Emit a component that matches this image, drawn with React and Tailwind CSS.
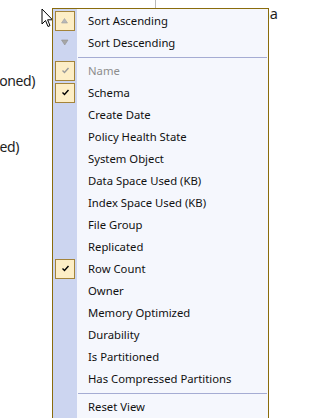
import React from 'react';

const items = [
  { label: 'Name', check: 'disabled' },
  { label: 'Schema', check: 'on' },
  { label: 'Create Date' },
  { label: 'Policy Health State' },
  { label: 'System Object' },
  { label: 'Data Space Used (KB)' },
  { label: 'Index Space Used (KB)' },
  { label: 'File Group' },
  { label: 'Replicated' },
  { label: 'Row Count', check: 'on' },
  { label: 'Owner' },
  { label: 'Memory Optimized' },
  { label: 'Durability' },
  { label: 'Is Partitioned' },
  { label: 'Has Compressed Partitions' },
];

const Box = ({ children }) => (
  <div className="w-[20px] h-[20px] border border-[#a4843a] bg-[#fdeec6]">{children}</div>
);

const Check = ({ color }) => (
  <svg width="18" height="18" viewBox="0 0 18 18">
    <polyline points="6.5,8.5 8.5,10.5 12.5,6" fill="none" stroke={color} strokeWidth="1.4" />
  </svg>
);

const Row = ({ icon, label, disabled }) => (
  <div className="flex h-[22px] items-center">
    <div className="w-[24px] h-full flex items-center justify-center">{icon}</div>
    <span className={`ml-[11px] text-[11.3px] whitespace-nowrap ${disabled ? 'text-[#8d8d8d]' : 'text-[#111]'}`}>
      {label}
    </span>
  </div>
);

const Separator = () => (
  <div className="h-[6px] pl-[25px] pr-[1px] pt-[3px]">
    <div className="h-px bg-[#a5acd3]" />
  </div>
);

export default function App() {
  return (
    <div
      className="relative w-[320px] h-[418px] overflow-hidden bg-white"
      style={{ fontFamily: '"Segoe UI", "Noto Sans", "Open Sans", sans-serif' }}
    >
      {/* page behind the menu */}
      <div className="flex h-[24px]">
        <div className="w-[155px]" />
        <div className="w-px h-[8px] bg-[#b9b9b9]" />
        <div className="w-[122px] flex justify-end pt-[5px] text-[14.5px] leading-[16px] text-[#1e1e1e]">Schema</div>
      </div>
      <div className="pt-[47px] w-[35px] flex justify-end text-[14px] tracking-[-0.4px] leading-[20px] text-[#1e1e1e]">
        oned)
      </div>
      <div className="pt-[46px] w-[19px] flex justify-end text-[14px] tracking-[-0.4px] leading-[20px] text-[#1e1e1e]">
        ed)
      </div>

      {/* mouse pointer */}
      <svg className="absolute left-[41px] top-[8px]" width="13" height="21" viewBox="0 0 13 21">
        <path d="M1 1 L1 16 L4.5 12.5 L7 18.5 L9 17.6 L6.6 11.8 L11.5 11.8 Z" fill="#fff" stroke="#000" strokeWidth="1" strokeLinejoin="miter" />
      </svg>

      {/* context menu */}
      <div className="absolute left-[52px] top-[8px] w-[217px] h-[440px] border border-[#8a6c0c] pt-px bg-[linear-gradient(90deg,#ccd5f0_0,#ccd5f0_24px,#f5f7fd_24px)]">
        <Row
          label="Sort Ascending"
          icon={
            <Box>
              <svg width="18" height="18" viewBox="0 0 18 18">
                <polygon points="5.5,11 11.5,11 8.5,6.5" fill="#b8b8b8" stroke="#a0a0a0" strokeWidth="0.6" />
              </svg>
            </Box>
          }
        />
        <Row
          label="Sort Descending"
          icon={
            <svg width="20" height="20" viewBox="0 0 20 20">
              <polygon points="6.5,7 13,7 9.75,12" fill="#a6a6a6" stroke="#909090" strokeWidth="0.6" />
            </svg>
          }
        />
        <Separator />
        {items.map((it) => (
          <Row
            key={it.label}
            label={it.label}
            disabled={it.check === 'disabled'}
            icon={
              it.check ? (
                <Box>
                  <Check color={it.check === 'disabled' ? '#9a9a9a' : '#000'} />
                </Box>
              ) : null
            }
          />
        ))}
        <Separator />
        <Row label="Reset View" />
      </div>
    </div>
  );
}
